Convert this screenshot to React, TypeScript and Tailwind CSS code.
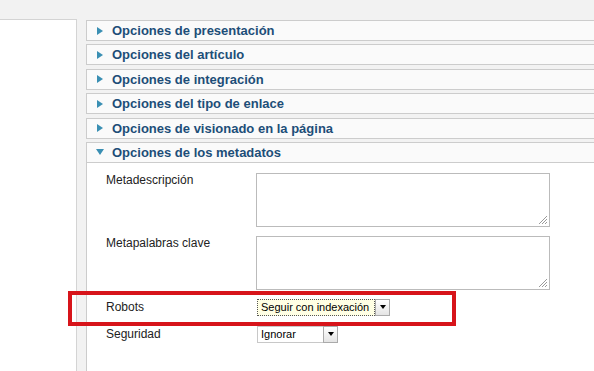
import React from 'react';

const sections = [
  'Opciones de presentación',
  'Opciones del artículo',
  'Opciones de integración',
  'Opciones del tipo de enlace',
  'Opciones de visionado en la página',
];

function Header({ title, open }: { title: string; open?: boolean }) {
  return (
    <div className="h-[21px] shrink-0 border border-[#cccccc] bg-[#fafafa] flex items-center pl-[9px]">
      {open ? (
        <span className="w-0 h-0 border-l-[4px] border-r-[4px] border-t-[6px] border-l-transparent border-r-transparent border-t-[#3a8fb3] mr-[8px]" />
      ) : (
        <span className="w-0 h-0 border-t-[4px] border-b-[4px] border-l-[6px] border-t-transparent border-b-transparent border-l-[#3a8fb3] ml-[1px] mr-[9px]" />
      )}
      <span className="text-[13px] font-bold text-[#1d4e78] leading-none">{title}</span>
    </div>
  );
}

function Grip() {
  return (
    <svg className="absolute right-[1px] bottom-[1px]" width="11" height="11" viewBox="0 0 11 11">
      <path d="M10 2 L2 10 M10 5 L5 10 M10 8 L8 10" stroke="#9a9a9a" strokeWidth="1" />
    </svg>
  );
}

function Textarea() {
  return <div className="relative w-[294px] h-[54px] border border-[#bbbbbb] bg-white"><Grip /></div>;
}

function FakeSelect({ value, width, focus }: { value: string; width: number; focus?: boolean }) {
  return (
    <div className="flex items-stretch h-[17px]" style={{ width }}>
      <div
        className={
          focus
            ? 'flex-1 flex items-center pl-[3px] bg-[#ffffe4] border border-dotted border-[#555] text-[11px] text-black'
            : 'flex-1 flex items-center pl-[3px] bg-white border border-[#c8c8c8] border-r-0 text-[11px] text-black'
        }
      >
        {value}
      </div>
      <div className="w-[15px] flex items-center justify-center bg-gradient-to-b from-white to-[#e4e4e4] border border-[#aaaaaa]">
        <span className="w-0 h-0 border-l-[3px] border-r-[3px] border-t-[4px] border-l-transparent border-r-transparent border-t-black" />
      </div>
    </div>
  );
}

export default function App() {
  return (
    <div
      className="relative w-[594px] h-[371px] overflow-hidden bg-[#f2f2f2] pt-[19px] flex"
      style={{ fontFamily: '"Liberation Sans", Arial, sans-serif' }}
    >
      <div className="w-[77px] shrink-0 bg-white border-t border-r border-[#d4d4d4]" />
      <div className="w-[9px] shrink-0" />
      <div className="flex-1 flex flex-col gap-[3.4px] pt-[1px] -mr-[4px]">
        {sections.map((s) => (
          <Header key={s} title={s} />
        ))}
        <div className="flex-1 flex flex-col">
          <Header title="Opciones de los metadatos" open />
          <div className="flex-1 bg-white border-l border-[#cccccc] pt-[10px] pl-[19px] flex flex-col text-[12px] text-[#222]">
            <div className="flex items-start mb-[9px]">
              <div className="w-[150px] leading-[14px]">Metadescripción</div>
              <Textarea />
            </div>
            <div className="flex items-start mb-[9px]">
              <div className="w-[150px] leading-[14px]">Metapalabras clave</div>
              <Textarea />
            </div>
            <div className="flex items-center mb-[10px]">
              <div className="w-[151px] leading-[14px]">Robots</div>
              <FakeSelect value="Seguir con indexación" width={133} focus />
            </div>
            <div className="flex items-center">
              <div className="w-[151px] leading-[14px]">Seguridad</div>
              <FakeSelect value="Ignorar" width={81} />
            </div>
          </div>
        </div>
      </div>
      <div className="absolute left-[68px] top-[291px] w-[388px] h-[35px] border-[4px] border-[#d7141a]" />
    </div>
  );
}
